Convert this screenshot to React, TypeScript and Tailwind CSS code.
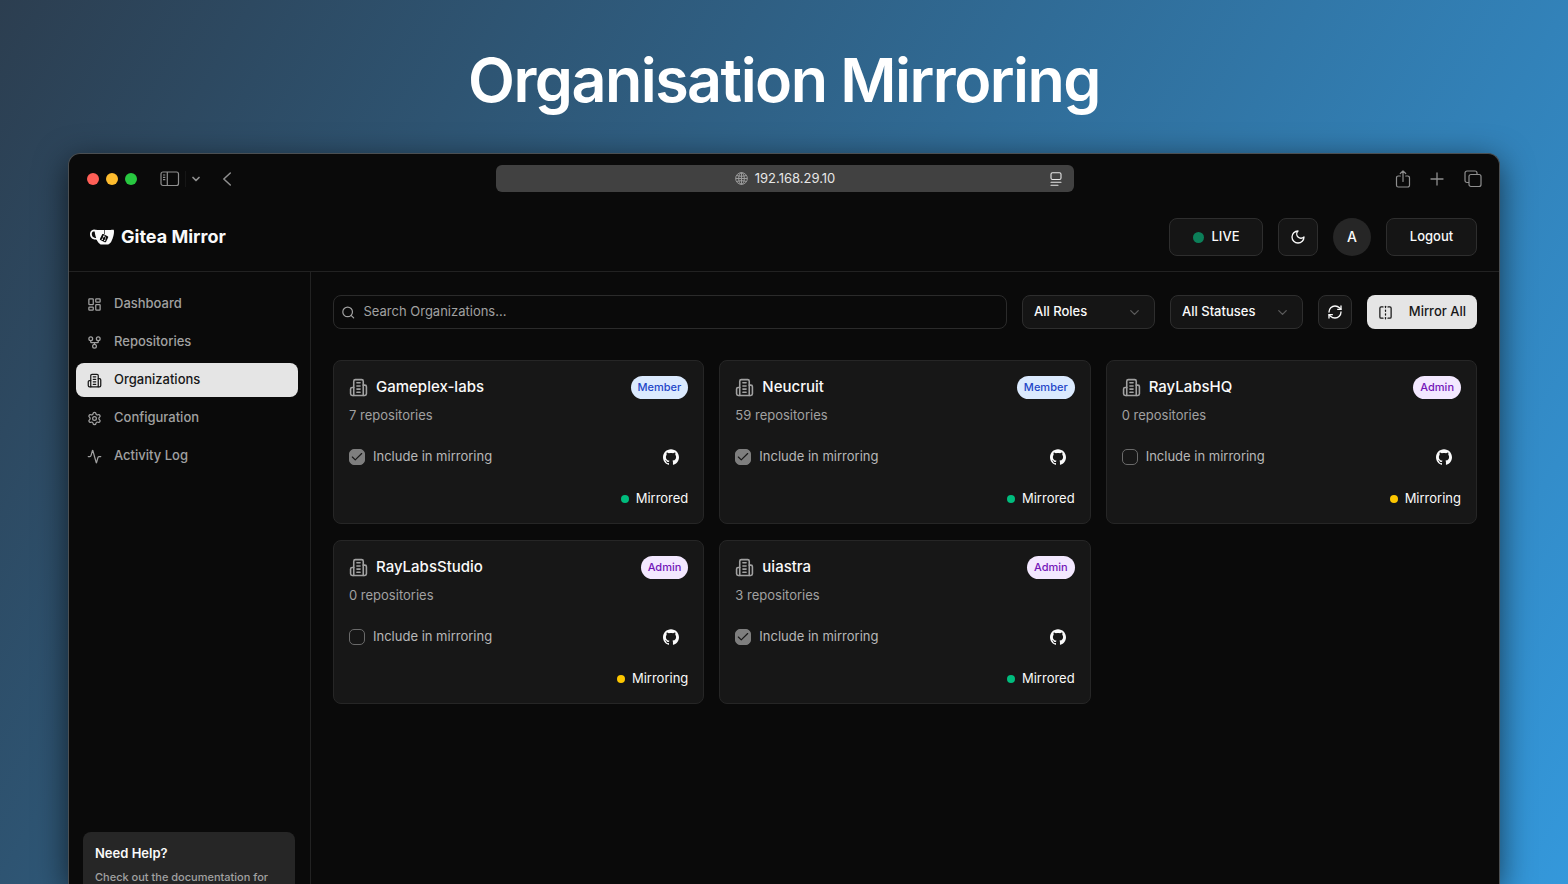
import React from "react";
import {
  LayoutDashboard,
  GitFork,
  Settings,
  Activity,
  Search,
  ChevronDown,
  RefreshCw,
  FlipHorizontal,
  Check,
} from "lucide-react";
import { SiGitea, SiGithub } from "react-icons/si";

type IconProps = { className?: string };

function BuildingIcon({ className }: IconProps) {
  return (
    <svg
      viewBox="0 0 24 24"
      fill="none"
      stroke="currentColor"
      strokeWidth="2"
      strokeLinecap="round"
      strokeLinejoin="round"
      className={className}
      aria-hidden="true"
    >
      <path d="M6 22V4a2 2 0 0 1 2-2h8a2 2 0 0 1 2 2v18Z" />
      <path d="M6 12H4a2 2 0 0 0-2 2v6a2 2 0 0 0 2 2h2" />
      <path d="M18 9h2a2 2 0 0 1 2 2v9a2 2 0 0 1-2 2h-2" />
      <path d="M10 6h4M10 10h4M10 14h4M10 18h4" />
    </svg>
  );
}

function MoonIcon({ className }: IconProps) {
  return (
    <svg
      viewBox="0 0 24 24"
      fill="none"
      stroke="currentColor"
      strokeWidth="2"
      strokeLinecap="round"
      strokeLinejoin="round"
      className={className}
      aria-hidden="true"
    >
      <path d="M12 3a6 6 0 0 0 9 9 9 9 0 1 1-9-9Z" />
    </svg>
  );
}

function BrowserBar() {
  const tool = "flex items-center justify-center text-[#8f8f8f]";
  return (
    <div className="grid h-[49px] grid-cols-[1fr_578px_1fr] items-center pr-4 pl-[18px]">
      <div className="flex items-center">
        <div className="flex gap-[7px]">
          <span className="size-3 rounded-full bg-[#ff5f57]" />
          <span className="size-3 rounded-full bg-[#febc2e]" />
          <span className="size-3 rounded-full bg-[#28c840]" />
        </div>
        <button aria-label="Toggle sidebar" className={`${tool} ml-[23px]`}>
          <svg width="20" height="16" viewBox="0 0 20 16" fill="none" stroke="currentColor" strokeWidth="1.2">
            <rect x="1" y="1" width="17.5" height="13.5" rx="2" />
            <path d="M7.3 1v13.5M3 4h2.3M3 6.3h2.3M3 8.6h2.3" />
          </svg>
        </button>
        <span className="ml-[5px] h-4 w-px bg-[#161616]" />
        <button aria-label="Tab groups" className={`${tool} ml-1`}>
          <ChevronDown className="size-3" strokeWidth={3.5} />
        </button>
        <button aria-label="Back" className={`${tool} ml-[19px]`}>
          <svg width="12" height="16" viewBox="0 0 12 16" fill="none" stroke="currentColor" strokeWidth="1.5" strokeLinecap="round" strokeLinejoin="round">
            <path d="M9.3 2 2.8 8l6.5 6" />
          </svg>
        </button>
      </div>
      <div className="grid h-[27px] grid-cols-[1fr_auto_1fr] items-center rounded-md bg-[#414141] px-[11px] text-[#e6e6e6]">
        <span />
        <span className="flex items-center gap-[7px] text-[13px]">
          <svg width="13" height="13" viewBox="0 0 12 12" fill="none" stroke="#9c9c9c" strokeWidth="0.9" aria-hidden="true">
            <circle cx="6" cy="6" r="5.4" />
            <ellipse cx="6" cy="6" rx="2.6" ry="5.4" />
            <path d="M6 .6v10.8M.6 6h10.8M1.5 3.2c2.5 1 6.500 1 9 0M1.500 8.800c2.500-1 6.500-1 9 0" />
          </svg>
          192.168.29.10
        </span>
        <button aria-label="Reader" className="justify-self-end">
          <svg width="14" height="14" viewBox="0 0 14 14" fill="none" stroke="currentColor" strokeWidth="1.1" strokeLinecap="round">
            <rect x="2" y=".8" width="10" height="6.7" rx="1.5" />
            <path d="M2 10.2h10M2 13.2h7" />
          </svg>
        </button>
      </div>
      <div className="flex items-center justify-end gap-[17px]">
        <button aria-label="Share" className={tool}>
          <svg width="16" height="18" viewBox="0 0 16 18" fill="none" stroke="currentColor" strokeWidth="1.2" strokeLinecap="round" strokeLinejoin="round">
            <path d="M5.3 6H3.3A1.8 1.8 0 0 0 1.5 7.8v7.4A1.8 1.8 0 0 0 3.3 17h9.4a1.8 1.8 0 0 0 1.8-1.8V7.800A1.800 1.800 0 0 0 12.700 6h-2M8 11.500V1M5.300 3.500 8 .8l2.700 2.700" />
          </svg>
        </button>
        <button aria-label="New tab" className={tool}>
          <svg width="18" height="18" viewBox="0 0 18 18" fill="none" stroke="currentColor" strokeWidth="1.3" strokeLinecap="round">
            <path d="M9 3v12M3 9h12" />
          </svg>
        </button>
        <button aria-label="Tab overview" className={tool}>
          <svg width="20" height="18" viewBox="0 0 20 18" fill="none" stroke="currentColor" strokeWidth="1.2" strokeLinejoin="round">
            <rect x="6" y="4.5" width="12" height="12" rx="2" />
            <path d="M6 12.5H4A2 2 0 0 1 2 10.5V3a2 2 0 0 1 2-2h8a2 2 0 0 1 2 2v1.5" />
          </svg>
        </button>
      </div>
    </div>
  );
}

function Header() {
  const box = "flex h-[38px] items-center justify-center rounded-lg border border-[#2e2e2e] bg-[#151515]";
  return (
    <header className="flex h-[69px] items-center justify-between border-b border-[#222] pr-[22px] pl-[21px]">
      <a href="#home" className="flex items-center gap-[7px] text-lg font-bold">
        <SiGitea className="size-6" />
        Gitea Mirror
      </a>
      <div className="flex items-center gap-[15px] text-[13px] font-medium">
        <button className={`${box} w-[94px] gap-2`}>
          <span className="size-[11px] rounded-full bg-[#0c7f59]" />
          LIVE
        </button>
        <button aria-label="Toggle theme" className={`${box} w-10`}>
          <MoonIcon className="size-4" />
        </button>
        <button aria-label="Account" className="size-[38px] rounded-full bg-[#262626] text-sm">
          A
        </button>
        <button className={`${box} w-[91px]`}>Logout</button>
      </div>
    </header>
  );
}

const links = [
  { label: "Dashboard", icon: LayoutDashboard },
  { label: "Repositories", icon: GitFork },
  { label: "Organizations", icon: BuildingIcon, active: true },
  { label: "Configuration", icon: Settings },
  { label: "Activity Log", icon: Activity },
];

function Sidebar() {
  return (
    <aside className="flex w-[242px] shrink-0 flex-col justify-between border-r border-[#222]">
      <nav className="flex flex-col gap-1 pt-[15px] pr-3 pl-[7px]">
        {links.map(({ label, icon: Icon, active }) => (
          <a
            key={label}
            href={`#${label}`}
            className={`flex h-[34px] items-center gap-3 rounded-lg px-[11px] text-[13px] font-medium ${
              active ? "bg-[#e5e5e5] text-[#171717]" : "text-[#a1a1a1]"
            }`}
          >
            <Icon className="size-[15px]" />
            {label}
          </a>
        ))}
      </nav>
      <div className="mr-[15px] ml-[14px] h-[52px] overflow-hidden rounded-t-lg bg-[#262626] px-3 pt-3">
        <h2 className="text-[13px] leading-[18px] font-semibold">Need Help?</h2>
        <p className="mt-[7px] text-[11px] leading-4 font-medium whitespace-nowrap text-[#a1a1a1]">
          Check out the documentation for
        </p>
      </div>
    </aside>
  );
}

function Filter({ label, options }: { label: string; options: string[] }) {
  return (
    <div className="grid w-[133px] shrink-0 items-center">
      <select
        aria-label={label}
        className="col-start-1 row-start-1 h-[34px] w-full appearance-none rounded-lg border border-[#2e2e2e] bg-[#151515] px-[11px] text-[13px] font-medium text-[#fafafa]"
      >
        {options.map((option) => (
          <option key={option}>{option}</option>
        ))}
      </select>
      <ChevronDown className="pointer-events-none col-start-1 row-start-1 mr-[13px] size-[15px] justify-self-end text-[#5c5c5c]" />
    </div>
  );
}

function Toolbar() {
  return (
    <div className="flex items-center gap-[15px]">
      <label className="flex h-[34px] flex-1 items-center gap-2 rounded-lg border border-[#2b2b2b] px-[7px]">
        <Search className="size-[15px] text-[#a1a1a1]" />
        <input
          type="text"
          aria-label="Search organizations"
          placeholder="Search Organizations..."
          className="w-full bg-transparent text-[13px] outline-none placeholder:text-[#a1a1a1]"
        />
      </label>
      <Filter label="Role" options={["All Roles", "Member", "Admin"]} />
      <Filter label="Status" options={["All Statuses", "Mirrored", "Mirroring"]} />
      <button
        aria-label="Refresh"
        className="flex size-[34px] items-center justify-center rounded-lg border border-[#2e2e2e] bg-[#151515]"
      >
        <RefreshCw className="size-4" />
      </button>
      <button className="flex h-[34px] w-[110px] items-center justify-between rounded-lg bg-[#e5e5e5] px-[11px] text-[13px] font-medium text-[#171717]">
        <FlipHorizontal className="size-[15px]" />
        Mirror All
      </button>
    </div>
  );
}

type Org = { name: string; repos: number; role: "Member" | "Admin"; included: boolean };

const orgs: Org[] = [
  { name: "Gameplex-labs", repos: 7, role: "Member", included: true },
  { name: "Neucruit", repos: 59, role: "Member", included: true },
  { name: "RayLabsHQ", repos: 0, role: "Admin", included: false },
  { name: "RayLabsStudio", repos: 0, role: "Admin", included: false },
  { name: "uiastra", repos: 3, role: "Admin", included: true },
];

function OrgCard({ name, repos, role, included }: Org) {
  return (
    <article className="flex flex-col rounded-lg border border-[#262626] bg-[#171717] p-[15px]">
      <div className="flex h-[23px] items-center justify-between">
        <div className="flex items-center gap-2">
          <BuildingIcon className="size-[19px] text-[#a1a1a1]" />
          <h3 className="text-[15px] font-medium">{name}</h3>
        </div>
        <span
          className={`flex h-[23px] items-center rounded-full px-[7px] text-[11px] font-medium ${
            role === "Member" ? "bg-[#dbeafe] text-[#2447c8]" : "bg-[#f3e8ff] text-[#7416b8]"
          }`}
        >
          {role}
        </span>
      </div>
      <p className="mt-[7px] text-[13px] leading-[18px] text-[#a1a1a1]">{repos} repositories</p>
      <div className="mt-4 flex h-[34px] items-center justify-between">
        <label className="flex items-center gap-2 text-[13px] text-[#b8b8b8]">
          <span className="grid place-items-center">
            <input
              type="checkbox"
              checked={included}
              readOnly
              className="col-start-1 row-start-1 size-4 appearance-none rounded-[5px] border border-[#6a6a6a] checked:border-[#7e7e7e] checked:bg-[#7e7e7e]"
            />
            {included && (
              <Check className="pointer-events-none col-start-1 row-start-1 size-[14px] text-[#171717]" />
            )}
          </span>
          Include in mirroring
        </label>
        <a href={`#${name}`} aria-label={`${name} on GitHub`} className="mr-[9px]">
          <SiGithub className="size-4" />
        </a>
      </div>
      <div className="mt-4 flex h-[18px] items-center justify-end gap-[7px] text-[13px]">
        <span className={`size-2 rounded-full ${included ? "bg-[#00bc7d]" : "bg-[#fdc700]"}`} />
        {included ? "Mirrored" : "Mirroring"}
      </div>
    </article>
  );
}

export default function App() {
  return (
    <div className="flex h-screen flex-col overflow-hidden bg-[linear-gradient(120deg,#2c3e50_0%,#3498db_100%)] font-['Inter','Liberation_Sans',sans-serif] text-[#fafafa]">
      <h1 className="flex h-[153px] shrink-0 items-center justify-center pt-2 text-[61px] font-semibold tracking-tight text-white">
        Organisation Mirroring
      </h1>
      <div className="mx-[68px] flex min-h-0 flex-1 flex-col rounded-t-xl border border-b-0 border-[#4b4f52] bg-[#0a0a0a] shadow-[0_8px_32px_rgba(0,0,0,0.6)]">
        <BrowserBar />
        <Header />
        <div className="flex min-h-0 flex-1">
          <Sidebar />
          <main className="flex-1 px-[22px] pt-[23px]">
            <Toolbar />
            <section className="mt-[31px] grid grid-cols-3 gap-x-[15px] gap-y-4">
              {orgs.map((org) => (
                <OrgCard key={org.name} {...org} />
              ))}
            </section>
          </main>
        </div>
      </div>
    </div>
  );
}
